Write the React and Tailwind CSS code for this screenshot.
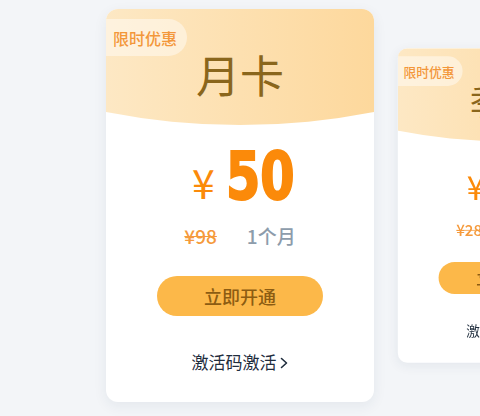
import React from "react";

const cjk = { fontFamily: '"Noto Sans CJK SC", "Noto Sans", sans-serif' };

function Card({ title, price, orig, period, className = "" }) {
  return (
    <div
      className={`relative w-[268px] h-[393px] shrink-0 rounded-[12px] bg-white overflow-hidden shadow-[0_4px_14px_rgba(30,50,80,0.07)] flex flex-col items-center ${className}`}
      style={cjk}
    >
      <div className="relative w-full h-[116px] shrink-0 bg-gradient-to-r from-[#fde8c4] to-[#fdd89c] [clip-path:circle(697px_at_50%_-581px)] flex justify-center pt-[39px]">
        <div className="absolute left-0 top-[10px] h-[37px] pl-[7px] pr-[10px] rounded-r-full bg-[rgba(255,255,255,0.45)] flex items-center text-[16px] font-medium text-[#f3973a]">
          限时优惠
        </div>
        <div className="text-[44px] leading-[52px] text-[#8a661c]">{title}</div>
      </div>
      <div className="mt-[19px] flex items-baseline pl-[6px]">
        <span className="text-[41px] leading-none text-[#fb8a0a] mr-[11px]">¥</span>
        <span
          className="inline-block text-[66px] leading-none font-bold text-[#fb8a0a] [-webkit-text-stroke:2px_#fb8a0a]"
          style={{ fontFamily: '"DejaVu Sans Condensed", "DejaVu Sans", sans-serif' }}
        >
          <span className="inline-block origin-left scale-x-[0.83] w-[68px] whitespace-nowrap">{price}</span>
        </span>
      </div>
      <div className="mt-[13px] flex items-center h-[26px]">
        <span className="text-[19px] leading-[26px] font-medium text-[#f59a3c] line-through decoration-[#f59a3c]">{orig}</span>
        <span className="ml-[30px] text-[19px] leading-[26px] font-medium text-[#8d9cab]">{period}</span>
      </div>
      <div className="mt-[27px] w-[166px] h-[40px] rounded-full bg-[#fcb849] flex items-center justify-center text-[18px] font-medium text-[#8c5c12]">
        立即开通
      </div>
      <div className="mt-[34px] flex items-center h-[24px] text-[17px] leading-[24px] text-[#1f2d3d]">
        <span>激活码激活</span>
        <svg width="10" height="14" viewBox="0 0 10 14" className="ml-[2px] mt-[2px]">
          <path d="M2.5 2.5 L7.5 7 L2.5 11.5" fill="none" stroke="#1f2d3d" strokeWidth="1.6" strokeLinecap="round" strokeLinejoin="round" />
        </svg>
      </div>
    </div>
  );
}

export default function App() {
  return (
    <div className="w-[480px] h-[416px] overflow-hidden bg-[#f3f5f8] flex items-start pt-[9px] pl-[106px]">
      <Card title="月卡" price="50" orig="¥98" period="1个月" />
      <Card title="季卡" price="138" orig="¥288" period="3个月" className="ml-[-3px] scale-[0.8]" />
    </div>
  );
}
